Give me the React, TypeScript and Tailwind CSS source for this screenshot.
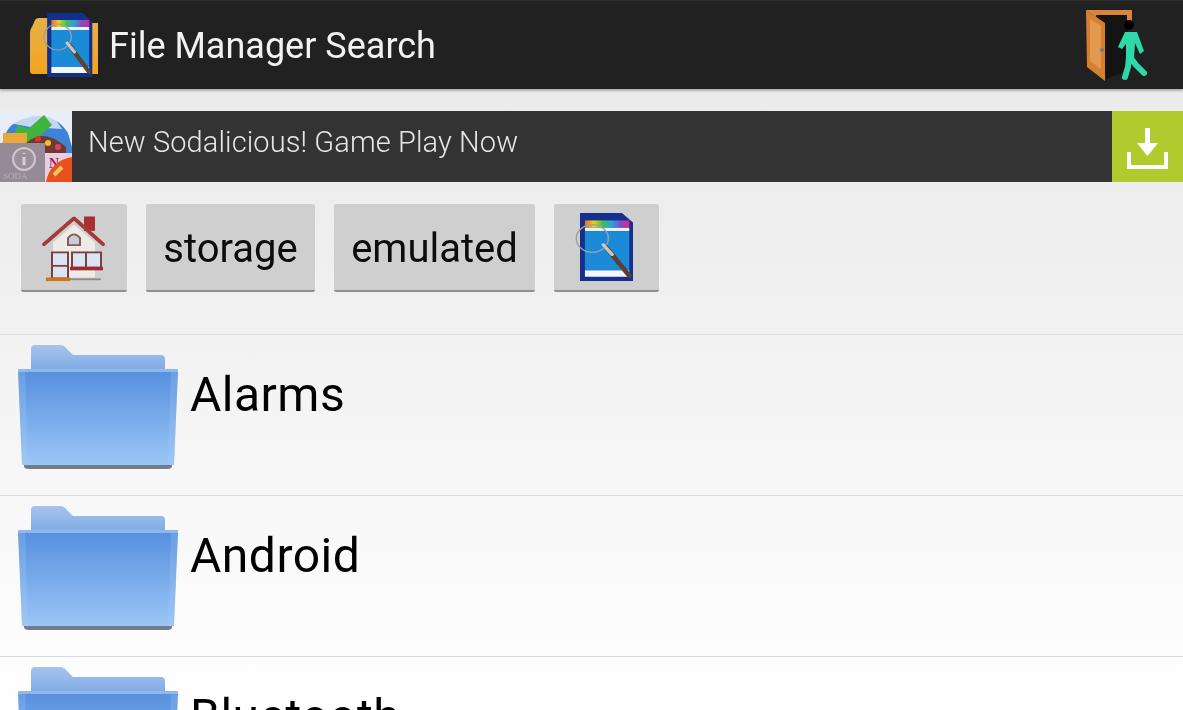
import React from "react";

function SdCard({ id }: { id: string }) {
  return (
    <>
      <defs>
        <linearGradient id={id} x1="0" x2="1" y1="0" y2="0">
          <stop offset="0" stopColor="#f06a20" />
          <stop offset="0.2" stopColor="#e8d020" />
          <stop offset="0.4" stopColor="#40c050" />
          <stop offset="0.6" stopColor="#30a0e0" />
          <stop offset="0.8" stopColor="#8050c0" />
          <stop offset="1" stopColor="#e02090" />
        </linearGradient>
      </defs>
      <path d="M3 1H37L46 10V65H3Z" fill="#14308c" />
      <rect x="7" y="8" width="36" height="7" fill={`url(#${id})`} />
      <rect x="7" y="15" width="36" height="3" fill="#e8f0f8" />
      <rect x="7" y="18" width="36" height="37" fill="#1b8bd8" />
      <rect x="7" y="55" width="36" height="6" fill="#f4f8fc" />
      <circle cx="13" cy="25" r="13" fill="none" stroke="#9aa0a8" strokeWidth="1.2" />
      <path d="M24 33L43 60" stroke="#5c4030" strokeWidth="4" strokeLinecap="round" />
      <path d="M22 31L29 40" stroke="#c8c8c8" strokeWidth="3" strokeLinecap="round" />
    </>
  );
}

function AppIcon() {
  return (
    <svg width="72" height="66" viewBox="0 0 72 66" className="block">
      <defs>
        <linearGradient id="fo" x1="0" x2="0" y1="0" y2="1">
          <stop offset="0" stopColor="#e6b04a" />
          <stop offset="1" stopColor="#f4a41c" />
        </linearGradient>
      </defs>
      <path d="M1 22Q1 17 3 15L6 8Q7 6 10 6H22V62H4Q1 62 1 59Z" fill="url(#fo)" />
      <path d="M58 11H69V62H58Z" fill="url(#fo)" />
      <g transform="translate(15 0) scale(1.05 1)">
        <SdCard id="sd1" />
      </g>
    </svg>
  );
}

function ExitIcon() {
  return (
    <svg width="66" height="72" viewBox="0 0 66 72" className="block">
      <path d="M12 6H42V62L20 70Z" fill="#141414" />
      <path d="M0 1H46V13H41V6H10V8Z" fill="#d8853a" />
      <path d="M0 1L19 14V72L1 58Z" fill="#d6802f" />
      <path d="M4 10L15 17V60L4 52Z" fill="#e29a50" />
      <circle cx="16" cy="41" r="2" fill="#777" />
      <circle cx="43" cy="16" r="5" fill="#000" />
      <path d="M39 23L51 23L58 42L54 45L49 34L48 50L40 50L40 35L36 40L32 38Z" fill="#2ed8a8" />
      <path
        d="M44 48L50 56L58 64M43 48L42 58L39 68"
        fill="none"
        stroke="#2ed8a8"
        strokeWidth="6"
        strokeLinecap="round"
        strokeLinejoin="round"
      />
    </svg>
  );
}

function AdThumb() {
  return (
    <svg width="72" height="71" viewBox="0 0 72 71" className="block shrink-0">
      <rect width="72" height="71" fill="#e8eef8" />
      <path d="M2 34Q6 12 24 8Q52 -2 68 22L72 36V71H0Z" fill="#3f82d6" />
      <path d="M10 12Q30 2 54 6L62 18L30 16Z" fill="#e4ecf8" opacity="0.8" />
      <path d="M14 24L18 14L28 18L44 4L52 14L32 32L18 30Z" fill="#3fb540" />
      <rect x="3" y="22" width="24" height="14" fill="#e9a83a" />
      <path d="M26 32Q44 16 66 36V50H30Z" fill="#6c3a30" />
      <circle cx="38" cy="28" r="3" fill="#e03030" />
      <circle cx="48" cy="32" r="3" fill="#f0c030" />
      <circle cx="58" cy="36" r="3" fill="#e04060" />
      <rect x="44" y="42" width="28" height="29" fill="#e6cfe0" />
      <text x="49" y="57" fontSize="14" fontWeight="700" fill="#a02060" fontFamily="Liberation Serif, serif">N</text>
      <path d="M72 46Q50 50 46 71H72Z" fill="#e8501c" />
      <path d="M62 56L54 64" stroke="#f0c860" strokeWidth="4" />
      <rect y="32" width="45" height="39" fill="#958a96" />
      <circle cx="24" cy="48" r="11" fill="#9c909c" stroke="#d0c8d0" strokeWidth="2" />
      <path d="M24 42V43M24 46V54" stroke="#d8d0d8" strokeWidth="3" />
      <text x="3" y="68" fontSize="9" fill="#b8aeb8" fontFamily="Liberation Serif, serif">SODA</text>
    </svg>
  );
}

function HomeIcon() {
  return (
    <svg width="66" height="70" viewBox="0 0 66 78" className="block" preserveAspectRatio="none">
      <path d="M12 34L33 14L54 34V73H12Z" fill="#eeeae6" />
      <rect x="43" y="5" width="11" height="16" fill="#a83030" />
      <path d="M3 36L33 7L62 36" fill="none" stroke="#a53a3a" strokeWidth="4" strokeLinejoin="round" strokeLinecap="round" />
      <path d="M27 37V29Q33 21 39 29V37Z" fill="#c8ced8" stroke="#8a5a5a" strokeWidth="2" />
      <rect x="11" y="45" width="16" height="29" fill="#dbe4f2" stroke="#7a4040" strokeWidth="2" />
      <path d="M11 60H27" stroke="#7a4040" strokeWidth="2" />
      <rect x="31" y="45" width="29" height="17" fill="#dbe4f2" stroke="#7a4040" strokeWidth="2" />
      <path d="M45 45V62" stroke="#7a4040" strokeWidth="2" />
      <rect x="29" y="61" width="33" height="4" fill="#9c2a30" />
      <rect x="5" y="73" width="24" height="4" fill="#c87818" />
      <rect x="29" y="74" width="31" height="2" fill="#8a8a8a" />
    </svg>
  );
}

function FolderIcon({ id }: { id: string }) {
  return (
    <svg width="162" height="128" viewBox="0 0 162 128" className="block shrink-0">
      <defs>
        <linearGradient id={id} x1="0" x2="0" y1="0" y2="1">
          <stop offset="0" stopColor="#568fdf" />
          <stop offset="1" stopColor="#9ac6f6" />
        </linearGradient>
        <linearGradient id={`${id}t`} x1="0" x2="0" y1="0" y2="1">
          <stop offset="0" stopColor="#a6c4ec" />
          <stop offset="1" stopColor="#7ba8e4" />
        </linearGradient>
      </defs>
      <path d="M14 6Q14 2 18 2H43Q47 2 50 6L56 12H144Q148 12 148 16V30H14Z" fill={`url(#${id}t)`} />
      <path d="M7 120H155V123Q155 126 150 126H12Q7 126 7 123Z" fill="#737d8a" />
      <path d="M1 28Q1 26 4 26H158Q161 26 161 28L157 122H5Z" fill={`url(#${id})`} />
      <path d="M1 28L5 122H11L8 26H4ZM161 28L157 122H151L154 26H158Z" fill="#b4d2f6" opacity="0.2" />
      <rect x="1" y="26" width="160" height="3" fill="#9cc0ee" opacity="0.8" />
    </svg>
  );
}

function Crumb({ children, w }: { children: React.ReactNode; w: string }) {
  return (
    <div
      className={`${w} h-[88px] flex items-center justify-center bg-[#cfcfcf] rounded-[2px] border-b-2 border-[#8f8f8f] text-[40px] text-[#0c0c0c]`}
    >
      {children}
    </div>
  );
}

function Row({ name, id }: { name: string; id: string }) {
  return (
    <div className="h-[161px] shrink-0 flex items-start border-t border-[#dcdcdc] pl-[17px]">
      <div className="pt-[8px]">
        <FolderIcon id={id} />
      </div>
      <div className="pl-[11px] pt-[30px] text-[48px] leading-[60px] tracking-[0.5px] text-black">{name}</div>
    </div>
  );
}

export default function App() {
  return (
    <div
      className="w-[1183px] h-[710px] overflow-hidden flex flex-col bg-gradient-to-b from-[#e8e8e8] via-[#f0f0f0] via-[40%] to-white blur-[0.4px]"
      style={{ fontFamily: "Roboto, 'Liberation Sans', sans-serif" }}
    >
      <header className="h-[89px] shrink-0 flex items-center justify-between bg-[#212121] border-t border-[#2e2e2e] pl-[29px] pr-[31px] shadow-[0_2px_2px_rgba(0,0,0,0.25)]">
        <div className="flex items-center gap-[8px]">
          <AppIcon />
          <span className="text-[36px] leading-[44px] pt-[2px] text-[#f2f2f2]">File Manager Search</span>
        </div>
        <ExitIcon />
      </header>
      <div className="mt-[22px] h-[71px] shrink-0 flex bg-[#333333]">
        <AdThumb />
        <div className="flex-1 flex items-center pl-[16px] pb-[7px] text-[29px] tracking-[0.1px] font-light text-[#e6e6e6]">
          New Sodalicious! Game Play Now
        </div>
        <div className="w-[71px] flex items-center justify-center bg-[#b1cb2f]">
          <svg width="41" height="41" viewBox="0 0 41 41" className="block mt-[3px]">
            <path d="M18 0H23V15H31L20.5 28L10 15H18Z" fill="#fff" />
            <path d="M2 24V39H39V24" fill="none" stroke="#fff" strokeWidth="4" />
          </svg>
        </div>
      </div>
      <nav className="h-[152px] shrink-0 flex items-start gap-[19px] pl-[21px] pt-[22px]">
        <Crumb w="w-[106px]">
          <HomeIcon />
        </Crumb>
        <Crumb w="w-[169px]">
          <span className="pt-[4px]">storage</span>
        </Crumb>
        <Crumb w="w-[201px]">
          <span className="pt-[4px]">emulated</span>
        </Crumb>
        <Crumb w="w-[105px]">
          <svg width="53" height="68" viewBox="3 1 43 64" preserveAspectRatio="none" className="block overflow-visible">
            <SdCard id="sd2" />
          </svg>
        </Crumb>
      </nav>
      <Row name="Alarms" id="f1" />
      <Row name="Android" id="f2" />
      <Row name="Bluetooth" id="f3" />
    </div>
  );
}
